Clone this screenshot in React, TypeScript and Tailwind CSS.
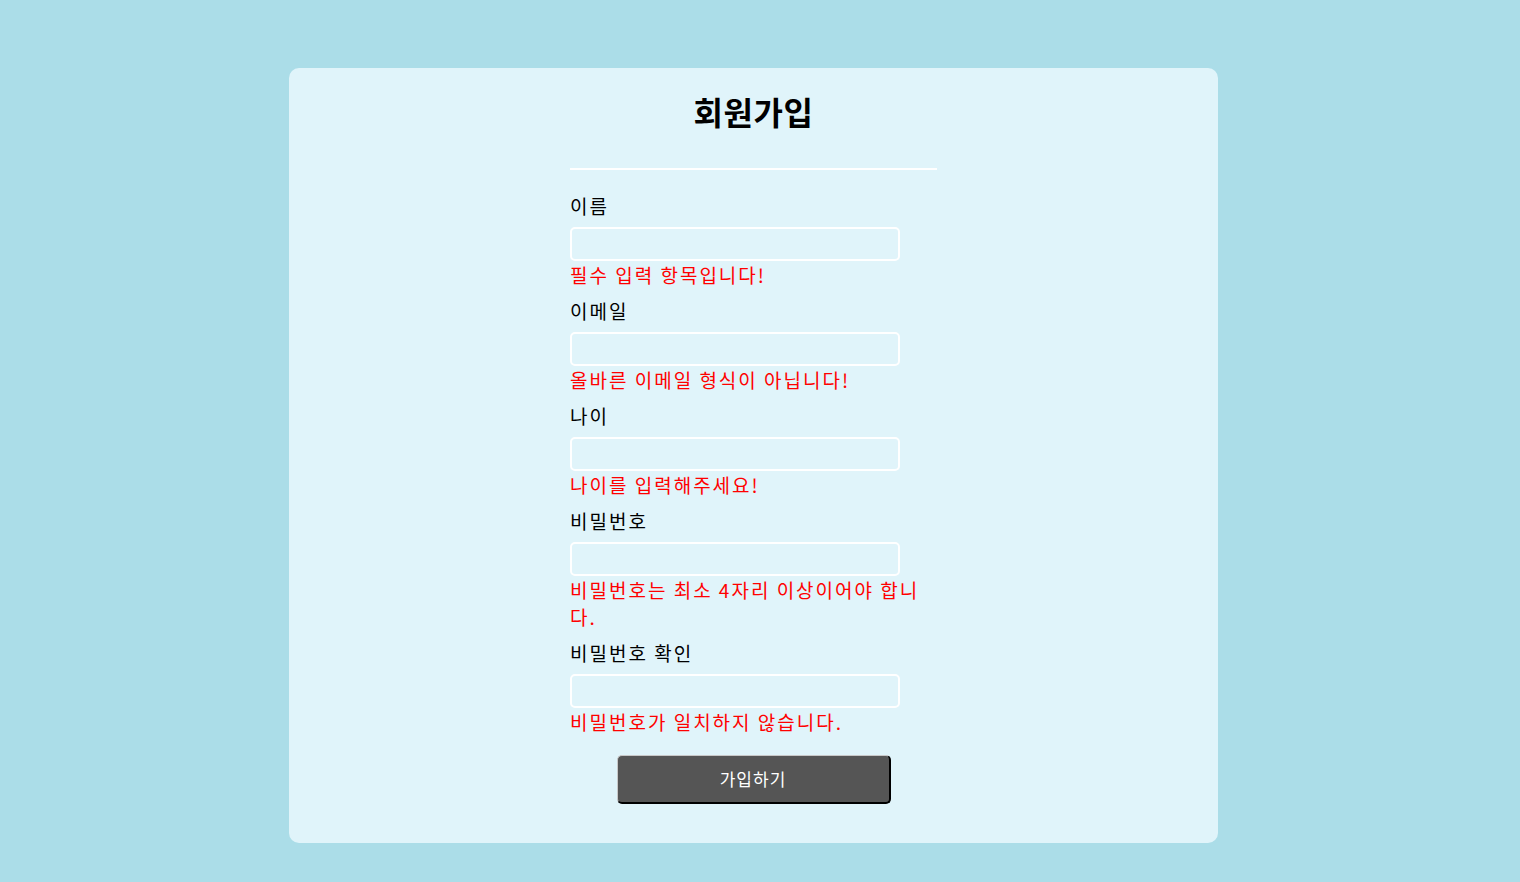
import React from "react";

const fields = [
  { label: "이름", error: "필수 입력 항목입니다!", type: "text" },
  { label: "이메일", error: "올바른 이메일 형식이 아닙니다!", type: "email" },
  { label: "나이", error: "나이를 입력해주세요!", type: "number" },
  { label: "비밀번호", error: "비밀번호는 최소 4자리 이상이어야 합니다.", type: "password" },
  { label: "비밀번호 확인", error: "비밀번호가 일치하지 않습니다.", type: "password" },
];

export default function App() {
  return (
    <div
      className="min-h-screen bg-[#abdde8] pt-[68px] pb-[40px] flex items-start justify-center pr-[13px]"
      style={{ fontFamily: '"Noto Sans CJK KR", "Noto Sans", sans-serif' }}
    >
      <div className="w-[929px] bg-[#e0f4fa] rounded-[10px] pt-[25px] pb-[39px] flex flex-col items-center">
        <h1 className="text-[32px] leading-[36px] font-bold text-black tracking-[0.5px]">회원가입</h1>
        <div className="w-[367px] h-[2px] bg-white mt-[39px]" />
        <form className="w-[367px] mt-[22px] flex flex-col" onSubmit={(e) => e.preventDefault()}>
          {fields.map((f) => (
            <div key={f.label} className="flex flex-col mb-[9px]">
              <label className="text-[19px] leading-[27px] tracking-[2px] text-black">{f.label}</label>
              <input
                type={f.type}
                className="mt-[8px] w-[330px] h-[34px] border-2 border-white rounded-[5px] bg-transparent outline-none px-2"
              />
              <span className="text-[19px] leading-[27px] tracking-[2px] text-[#ff0000]">{f.error}</span>
            </div>
          ))}
          <button
            type="submit"
            className="self-center mt-[11px] w-[274px] h-[49px] bg-[#555555] text-white text-[17px] tracking-[1px] rounded-[5px] border border-t-[#c8c8c8] border-l-[#c8c8c8] border-r-black border-b-black border-r-2 border-b-2"
          >
            가입하기
          </button>
        </form>
      </div>
    </div>
  );
}
